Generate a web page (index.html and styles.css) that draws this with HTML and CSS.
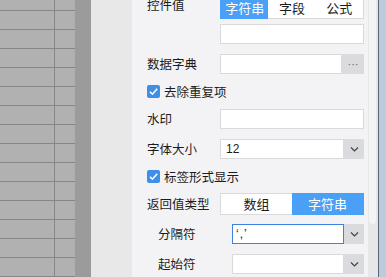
FILE: index.html
```html
<!DOCTYPE html>
<html lang="zh-CN">
<head>
    <meta charset="UTF-8">
    <title>控件属性</title>
    <link rel="stylesheet" href="styles.css">
</head>
<body>
    <div class="page">
        <div class="sheet"></div>
        <div class="sheet-edge"></div>
        <div class="gutter"></div>

        <div class="panel">
            <div class="row row-first">
                <span class="label label-top">控件值</span>
                <div class="seg">
                    <span class="seg-item active">字符串</span>
                    <span class="seg-item">字段</span>
                    <span class="seg-item">公式</span>
                </div>
            </div>

            <div class="row row-tight">
                <span class="label"></span>
                <div class="input"></div>
            </div>

            <div class="row">
                <span class="label">数据字典</span>
                <div class="combo">
                    <div class="input"></div>
                    <span class="combo-btn dots">···</span>
                </div>
            </div>

            <div class="row row-check">
                <span class="check">
                    <svg width="13" height="13" viewBox="0 0 13 13"><path d="M3 6.8 L5.4 9.2 L10.2 3.8" fill="none" stroke="#fff" stroke-width="1.6"/></svg>
                </span>
                <span class="check-text">去除重复项</span>
            </div>

            <div class="row">
                <span class="label">水印</span>
                <div class="input"></div>
            </div>

            <div class="row">
                <span class="label">字体大小</span>
                <div class="combo">
                    <div class="input">12</div>
                    <span class="combo-btn">
                        <svg width="9" height="5" viewBox="0 0 9 5"><path d="M1 0.5 L4.5 4 L8 0.5" fill="none" stroke="#444" stroke-width="1.2"/></svg>
                    </span>
                </div>
            </div>

            <div class="row row-check">
                <span class="check">
                    <svg width="13" height="13" viewBox="0 0 13 13"><path d="M3 6.8 L5.4 9.2 L10.2 3.8" fill="none" stroke="#fff" stroke-width="1.6"/></svg>
                </span>
                <span class="check-text">标签形式显示</span>
            </div>

            <div class="row">
                <span class="label">返回值类型</span>
                <div class="seg">
                    <span class="seg-item">数组</span>
                    <span class="seg-item active">字符串</span>
                </div>
            </div>

            <div class="row">
                <span class="label label-sub">分隔符</span>
                <div class="combo">
                    <div class="input focused quoted">‘,’</div>
                    <span class="combo-btn">
                        <svg width="9" height="5" viewBox="0 0 9 5"><path d="M1 0.5 L4.5 4 L8 0.5" fill="none" stroke="#444" stroke-width="1.2"/></svg>
                    </span>
                </div>
            </div>

            <div class="row">
                <span class="label label-sub">起始符</span>
                <div class="combo">
                    <div class="input"></div>
                    <span class="combo-btn">
                        <svg width="9" height="5" viewBox="0 0 9 5"><path d="M1 0.5 L4.5 4 L8 0.5" fill="none" stroke="#444" stroke-width="1.2"/></svg>
                    </span>
                </div>
            </div>
        </div>

        <div class="scrollbar">
            <div class="thumb"></div>
        </div>
        <div class="frame"></div>
    </div>
</body>
</html>
```

FILE: styles.css
```css
body {
    margin: 0;
    font-family: "Noto Sans CJK SC", "Liberation Sans", sans-serif;
    font-size: 12px;
    color: #1c1c1c;
    overflow: hidden;
}

.page {
    display: flex;
    height: 277px;
    overflow: hidden;
}

.sheet {
    width: 75px;
    flex-shrink: 0;
    background-color: #b1b1b1;
    background-image:
        linear-gradient(to right, transparent 54px, #878787 54px, #878787 55px, transparent 55px),
        linear-gradient(#878787 1px, transparent 1px);
    background-size: 100% 100%, 100% 19px;
    background-position: 0 0, 0 10px;
}

.sheet-edge {
    width: 16px;
    flex-shrink: 0;
    background-color: #9b9b9b;
}

.gutter {
    width: 41px;
    flex-shrink: 0;
    background-color: #e8e8e8;
}

.panel {
    width: 236px;
    flex-shrink: 0;
    box-sizing: border-box;
    padding: 0 4px 0 15px;
    background-color: #f3f3f5;
}

.row {
    display: flex;
    align-items: center;
    height: 20px;
    margin-top: 10px;
}

.row-first {
    margin-top: -3px;
    height: 22px;
    align-items: flex-start;
}

.row-tight {
    margin-top: 5px;
}

.row-check {
    margin-top: 8px;
    margin-bottom: -1px;
    height: 18px;
}

.label {
    width: 73px;
    flex-shrink: 0;
    line-height: 20px;
    font-size: 12.5px;
}

.label-top {
    margin-top: -2px;
}

.label-sub {
    width: 74px;
    padding-left: 11px;
}

.check-text {
    font-size: 12.5px;
}

.input {
    flex: 1;
    height: 20px;
    box-sizing: border-box;
    border: 1px solid #dadada;
    background-color: #fff;
    padding: 0 5px;
    line-height: 18px;
    font-family: "Liberation Sans", sans-serif;
    font-size: 12px;
}

.input.focused {
    border-color: #3b82e2;
}

.quoted {
    padding-left: 3px;
    letter-spacing: 1px;
}

.combo {
    flex: 1;
    display: flex;
    height: 20px;
}

.combo-btn {
    width: 20px;
    flex-shrink: 0;
    background-color: #dadbde;
    display: flex;
    align-items: center;
    justify-content: center;
}

.dots {
    width: 22px;
    color: #666;
    font-size: 11px;
    letter-spacing: 0;
    font-family: "Liberation Sans", sans-serif;
}

.seg {
    flex: 1;
    display: flex;
    height: 22px;
}

.seg-item {
    flex: 1;
    box-sizing: border-box;
    border-top: 1px solid #dadada;
    border-bottom: 1px solid #dadada;
    background-color: #fff;
    text-align: center;
    line-height: 20px;
    font-size: 13px;
}

.seg-item:first-child {
    border-left: 1px solid #dadada;
}

.seg-item:last-child {
    border-right: 1px solid #dadada;
}

.seg-item.active {
    background-color: #4aa0f6;
    border-color: #4aa0f6;
    color: #fff;
}

.check {
    width: 13px;
    height: 13px;
    border-radius: 2px;
    background-color: #3f8fea;
    display: flex;
    margin-right: 4px;
}

.scrollbar {
    width: 10px;
    flex-shrink: 0;
    background-color: #e7e7e9;
}

.thumb {
    width: 7px;
    height: 224px;
    margin-left: 1px;
    background-color: #f4f4f6;
    border-radius: 0 0 4px 4px;
}

.frame {
    flex: 1;
    border-left: 1px solid #56677c;
    background-color: #bccbdc;
}
```
